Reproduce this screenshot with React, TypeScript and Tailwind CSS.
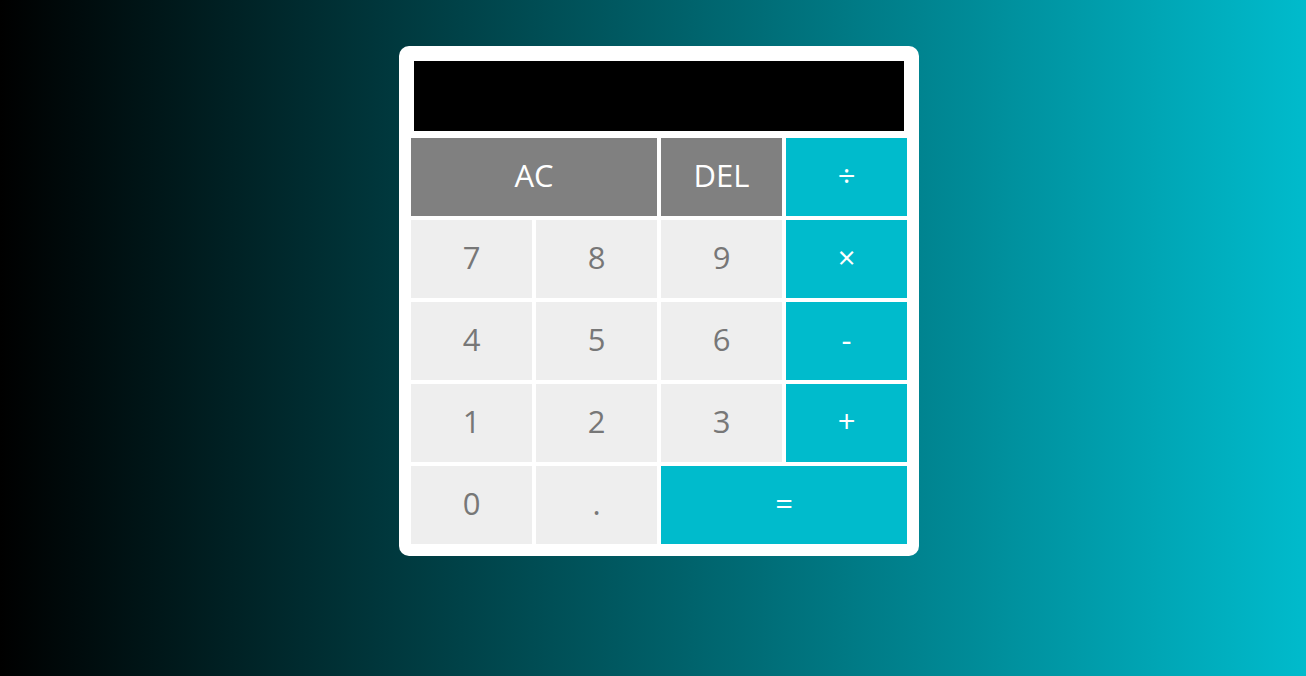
const keys: { label: string; kind: "fn" | "num" | "op"; span?: boolean }[] = [
  { label: "AC", kind: "fn", span: true },
  { label: "DEL", kind: "fn" },
  { label: "÷", kind: "op" },
  { label: "7", kind: "num" },
  { label: "8", kind: "num" },
  { label: "9", kind: "num" },
  { label: "×", kind: "op" },
  { label: "4", kind: "num" },
  { label: "5", kind: "num" },
  { label: "6", kind: "num" },
  { label: "-", kind: "op" },
  { label: "1", kind: "num" },
  { label: "2", kind: "num" },
  { label: "3", kind: "num" },
  { label: "+", kind: "op" },
  { label: "0", kind: "num" },
  { label: ".", kind: "num" },
  { label: "=", kind: "op", span: true },
];

const kindClass = {
  fn: "bg-[#808080] text-white",
  num: "bg-[#eeeeee] text-[#777777]",
  op: "bg-[#00bbcc] text-white",
};

export default function App() {
  return (
    <div className="flex h-[676px] w-full justify-center bg-[linear-gradient(to_right,#000000,#00bbcc)] pl-3 pt-[46px] font-['Open_Sans',sans-serif]">
      <div className="h-[510px] w-[520px] rounded-[10px] bg-white px-3 pt-[15px]">
        <div className="mx-[3px] h-[70px] bg-black" />
        <div className="mt-[7px] grid grid-cols-[repeat(4,121px)] auto-rows-[78px] gap-1">
          {keys.map((k) => (
            <button
              key={k.label}
              className={`flex items-center justify-center pb-1 text-[31px] leading-none ${kindClass[k.kind]} ${k.span ? "col-span-2" : ""}`}
            >
              {k.label}
            </button>
          ))}
        </div>
      </div>
    </div>
  );
}
